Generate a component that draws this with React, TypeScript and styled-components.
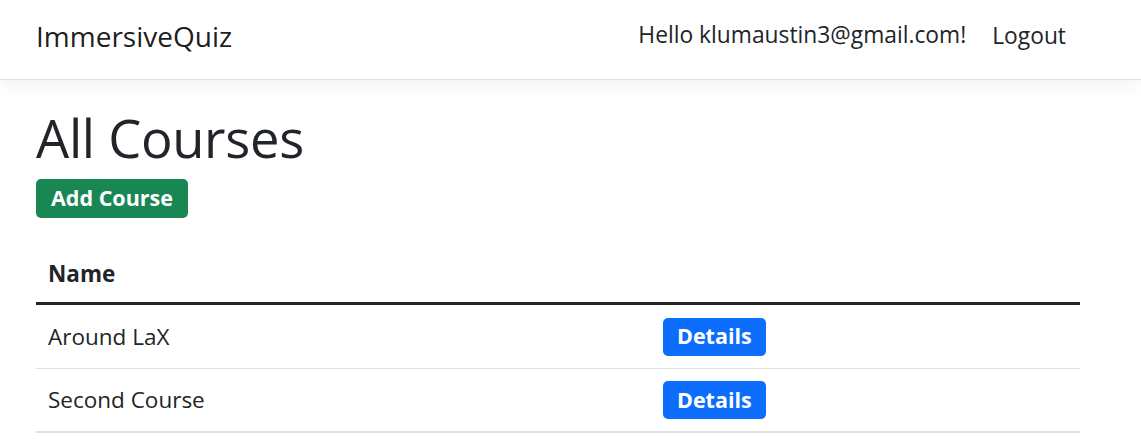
import React from "react";
import styled, { createGlobalStyle } from "styled-components";

const Global = createGlobalStyle`
  html, body { margin: 0; padding: 0; background: #fff; }
  body {
    font-family: "Open Sans", "Noto Sans", sans-serif;
    color: #212529;
    font-size: 22.5px;
    line-height: 1.5;
  }
  * { box-sizing: border-box; }
`;

const NavBar = styled.header`
  height: 80px;
  border-bottom: 1px solid #dee2e6;
  box-shadow: 0 6px 18px rgba(0, 0, 0, 0.05);
  background: #fff;
  position: relative;
`;

const NavInner = styled.nav`
  width: 1044px;
  margin-left: 36px;
  height: 79px;
  display: flex;
  align-items: center;
`;

const Brand = styled.a`
  font-size: 28px;
  color: rgba(0, 0, 0, 0.9);
  text-decoration: none;
  line-height: 1.5;
  position: relative;
  top: -4px;
`;

const NavRight = styled.div`
  margin-left: auto;
  display: flex;
  align-items: center;
`;

const NavText = styled.span<{ $dy: number; $pad: string }>`
  padding: ${(p) => p.$pad};
  color: #212529;
  font-size: 22.8px;
  position: relative;
  top: ${(p) => p.$dy}px;
`;

const Main = styled.main`
  width: 1044px;
  margin-left: 36px;
  padding-top: 26px;
`;

const Title = styled.h1`
  font-size: 52.5px;
  font-weight: 500;
  line-height: 1.2;
  margin: 0 0 10px 0;
  letter-spacing: -0.3px;
`;

const Button = styled.a<{ $variant: "success" | "primary" }>`
  display: inline-flex;
  align-items: center;
  justify-content: center;
  height: ${(p) => (p.$variant === "success" ? 39 : 38)}px;
  padding: 0 ${(p) => (p.$variant === "success" ? 15 : 14)}px;
  border-radius: 5px;
  font-weight: 700;
  font-size: 21.5px;
  color: #fff;
  text-decoration: none;
  background: ${(p) => (p.$variant === "success" ? "#198754" : "#0d6efd")};
`;

const Table = styled.div`
  margin-top: 24px;
  display: grid;
  grid-template-columns: 615px 1fr;
`;

const HeadCell = styled.div`
  padding: 12px;
  height: 63px;
  font-weight: 700;
  font-size: 22.5px;
  display: flex;
  align-items: center;
  border-bottom: 3px solid #212529;
  & > span { position: relative; top: 2px; }
`;

const Cell = styled.div<{ $last?: boolean }>`
  padding: 12px;
  height: 64px;
  display: flex;
  align-items: center;
  border-bottom: ${(p) => (p.$last ? 2 : 1)}px solid #dee2e6;
`;

const courses = ["Around LaX", "Second Course"];

export default function App() {
  return (
    <>
      <Global />
      <NavBar>
        <NavInner>
          <Brand href="#">ImmersiveQuiz</Brand>
          <NavRight>
            <NavText $dy={-4} $pad="0 14px 0 0">Hello klumaustin3@gmail.com!</NavText>
            <NavText $dy={-3} $pad="0 14px 0 12px">Logout</NavText>
          </NavRight>
        </NavInner>
      </NavBar>
      <Main>
        <Title>All Courses</Title>
        <Button $variant="success" href="#">Add Course</Button>
        <Table>
          <HeadCell><span>Name</span></HeadCell>
          <HeadCell />
          {courses.map((c, i) => (
            <React.Fragment key={c}>
              <Cell $last={i === courses.length - 1}>{c}</Cell>
              <Cell $last={i === courses.length - 1}>
                <Button $variant="primary" href="#">Details</Button>
              </Cell>
            </React.Fragment>
          ))}
        </Table>
      </Main>
    </>
  );
}
